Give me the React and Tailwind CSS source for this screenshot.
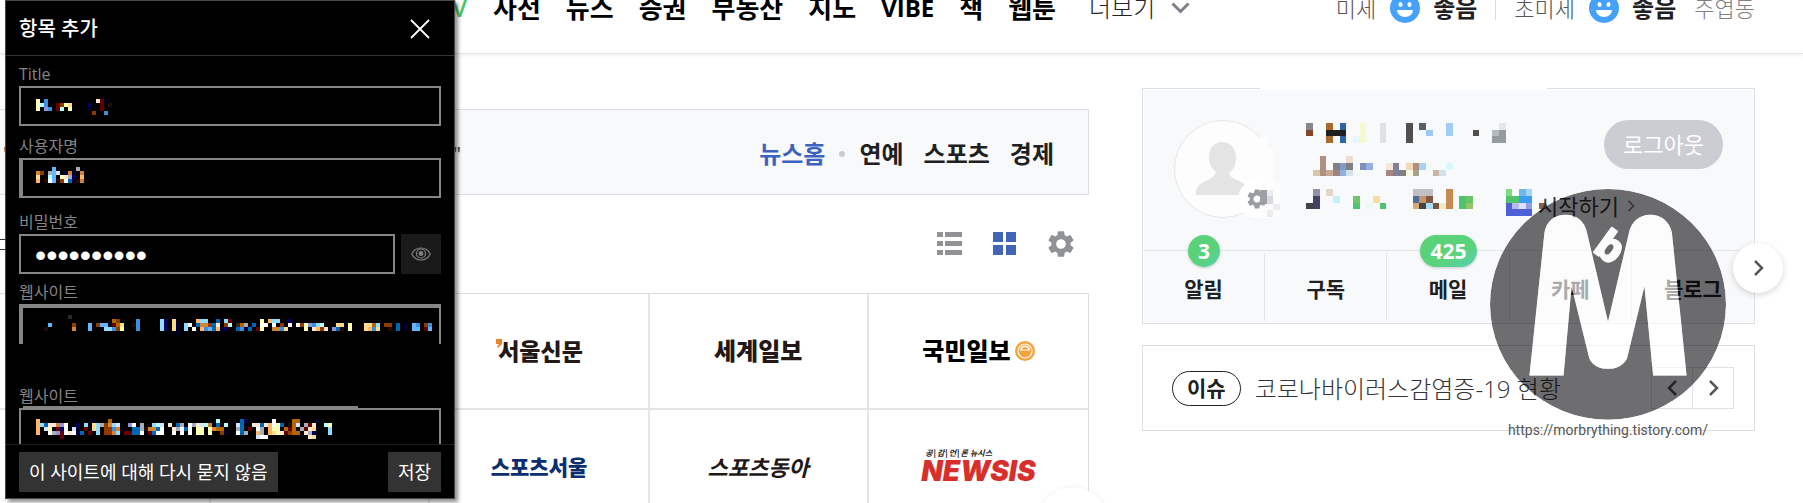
import React, { useState } from 'react';
import { MdSettings } from 'react-icons/md';

const services = ['사전', '뉴스', '증권', '부동산', '지도', 'VIBE', '책', '웹툰'];

const dust = [
  { label: '미세', value: '좋음' },
  { label: '초미세', value: '좋음' },
];

const tabs = [
  { label: '알림', badge: '3' },
  { label: '구독' },
  { label: '메일', badge: '425' },
  { label: '카페' },
  { label: '블로그' },
];

// one letter per colour of the masked field values
const palette = {
  y: '#ffffb6', Y: '#ffdb90', b: '#3a8fde', B: '#66b6ff', c: '#b6ffff', C: '#90dbff',
  m: '#660000', n: '#000066', N: '#000030', o: '#903a00', O: '#b66600', t: '#ffb666',
  T: '#cf8438', w: '#ffffff', g: '#a8adb8', G: '#2a2a2a', k: '#220a06', p: '#9090db',
  D: '#0066b6', l: '#d0e6ff', v: '#fde7d0',
};

// every row is a list of runs: start column, then one letter per cell
const masks = {
  title: ['0y 2b 15vmN', '0ycb 5moyY 13n 16m 18k', '0y 2pb 5mc 8y 13N 16m', '14o 17b'],
  user: ['4B 10g', '0To 3gBl 7NTN 11T', '0Y 3cB 6yvgn 11t', '0t 2kwBkowDNkT'],
  site: [
    '6G',
    '17Oo 23b 29Cn 32Y 38tCC 43D 45Cm 54y 56tCC 61n',
    '1B 7o 11B 13oBBNmOY 22kb 29Cn 32YN 35Cw 38DTToDv 45oc 48GOg 52D 54ww 57w 59o 61w 63woypbCc 73YY 76y 80YYOC 85oo 88D 90N 92Bb 95ob',
    '0k 7T 11B 15CCbo 19y 23b 29Cn 32YN 35C 37w 39tbBDtNn 48DbND 53my 57TTbY 65y 67vtov 72pDk 76y 80YtbY 86k 88D 90N 92BB 95mB',
    '33N',
  ],
  login: [
    '0t 14N 18O 45c 51Dn 59w 64OO 70N',
    '0tCDvvTpw 10n 12C 14YCgoTCl 23pw 26g 29Ccl 33v 35Dg 38wgvlcT 45Dkc 50lD 54vvDvtwyD 63kOl 67gmv 72cy',
    '0t 2ly 5mnw 9lN 12m 14YC 17oobT 24DDgkTTDw 34vgwDw 40yy 43yTOO 50gD 53m 55wg 58tyy 62OmO 66gmvY 73C',
    '0t 3wgpmwvwND 13m 15C 17ooTC 22mmDDw 28mDww 34w 36w 38w 40yy 43y 46oN 50wDg 55tg 58tYyvmoOO 67vgn 73C',
    '6m 55lww 68vY',
  ],
};

// column, row, width, height, colour
const profileCells = [
  [0, 0, 1, 1, '#888888'], [0, 1, 1, 1, '#84442a'], [3, 0, 1, 3, '#a8682e'], [5, 0, 1, 3, '#2a64aa'],
  [3, 1, 3, 1, '#202020'], [7, 2, 1, 1, '#e4f8fb'], [8, 0, 1, 3, '#f8f8d0'], [11, 0, 1, 3, '#dde2e6'],
  [15, 0, 1, 3, '#505050'], [17, 0, 1, 1, '#566068'], [18, 1, 1, 1, '#9cc8f4'], [21, 0, 1, 2, '#a0ccf6'],
  [25, 1, 1, 1, '#505050'], [29, 0, 1, 1, '#e4e6e8'], [28, 1, 1, 1, '#b4babf'], [29, 1, 1, 2, '#959ca0'],
  [28, 2, 1, 1, '#959ca0'],
  [1, 7, 1, 1, '#d8c4a8'], [2, 5, 1, 3, '#b09080'], [3, 7, 1, 1, '#c8aa94'], [4, 6, 1, 1, '#808080'],
  [4, 7, 1, 1, '#9c8480'], [5, 6, 1, 1, '#809cc8'], [5, 7, 1, 1, '#92b0e0'], [6, 5, 1, 1, '#ecdcd4'],
  [6, 6, 1, 1, '#808080'], [6, 7, 1, 1, '#d4e0ea'], [8, 6, 1, 1, '#8090bc'], [9, 6, 1, 1, '#92b0e0'],
  [12, 6, 1, 1, '#f6e8d8'], [12, 7, 1, 1, '#a88480'], [13, 6, 1, 2, '#808098'], [14, 7, 1, 1, '#808080'],
  [15, 6, 1, 1, '#f4d8b4'], [15, 7, 1, 1, '#f6fae4'], [16, 6, 1, 1, '#b09080'], [16, 7, 1, 1, '#a8a090'],
  [17, 6, 1, 1, '#acd0f4'], [18, 6, 1, 1, '#f4faf4'], [19, 7, 1, 1, '#ccb4a4'], [20, 7, 1, 1, '#d4e0ea'],
  [21, 6, 1, 1, '#d8f8fb'],
  [0, 12, 1, 1, '#444444'], [1, 10, 1, 1, '#9090a8'], [1, 11, 1, 2, '#444068'], [3, 10, 1, 1, '#e4d4c8'],
  [4, 11, 1, 1, '#c4f0f8'], [7, 11, 1, 1, '#70c46c'], [7, 12, 1, 1, '#50c46c'], [9, 12, 1, 1, '#ecf8f4'],
  [10, 11, 1, 1, '#f6dca0'], [11, 12, 1, 1, '#50c46c'], [16, 10, 3, 1, '#c0c0c2'], [16, 11, 1, 1, '#506c94'],
  [17, 11, 1, 1, '#c89468'], [18, 11, 1, 1, '#805844'], [16, 12, 1, 1, '#d8a870'], [17, 12, 1, 1, '#444444'],
  [18, 12, 1, 1, '#acdcf8'], [19, 12, 1, 1, '#785440'], [20, 12, 1, 1, '#f4e8cc'], [21, 10, 1, 3, '#c48c50'],
  [23, 11, 1, 2, '#50c46c'], [24, 11, 1, 1, '#68c468'], [24, 12, 1, 1, '#98c468'], [30, 10, 1, 1, '#80dc80'],
  [31, 10, 1, 1, '#ffffff'], [32, 10, 1, 1, '#6cb8ec'], [33, 10, 1, 1, '#a4d4f4'], [30, 11, 2, 1, '#50c46c'],
  [32, 11, 2, 1, '#3c9cf4'], [30, 12, 1, 1, '#4c60d8'], [31, 12, 1, 1, '#b4bcf0'], [32, 12, 1, 1, '#dce0f8'],
  [33, 12, 1, 1, '#949ce8'], [30, 13, 4, 1, '#4c60d8'], [35, 12, 1, 1, '#8c6048'],
];

function Mask({ rows, className }) {
  const cells = [];
  rows.forEach((row, y) => {
    row.split(' ').forEach((run) => {
      const [, start, letters] = run.match(/^(\d+)([a-zA-Z]+)$/);
      [...letters].forEach((l, i) => {
        cells.push({ x: Number(start) + i, y, fill: palette[l] });
      });
    });
  });
  return (
    <svg
      width="400"
      height="20"
      viewBox="0 0 100 5"
      shapeRendering="crispEdges"
      aria-hidden="true"
      className={`absolute pointer-events-none ${className}`}
    >
      {cells.map((c) => (
        <rect key={`${c.x}-${c.y}`} x={c.x} y={c.y} width="1" height="1" fill={c.fill} />
      ))}
    </svg>
  );
}

function Chevron({ dir = 'right', className }) {
  const d = { right: 'M2 1l7 7-7 7', left: 'M9 1L2 8l7 7' }[dir];
  return (
    <svg width="11" height="16" viewBox="0 0 11 16" fill="none" stroke="currentColor" strokeWidth="2.5" className={className}>
      <path d={d} />
    </svg>
  );
}

function Smile() {
  return (
    <svg width="30" height="30" viewBox="0 0 30 30" className="shrink-0">
      <circle cx="15" cy="15" r="15" fill="#45a1fb" />
      <ellipse cx="10.5" cy="11.5" rx="2" ry="2.5" fill="#fff" />
      <ellipse cx="19.5" cy="11.5" rx="2" ry="2.5" fill="#fff" />
      <path d="M7 17h16a8 7 0 0 1-16 0z" fill="#fff" />
    </svg>
  );
}

function Field({ id, label, className, children }) {
  return (
    <div className={className}>
      <label htmlFor={id} className="block h-6 text-base leading-6 text-[#858585]">
        {label}
      </label>
      <div className="relative flex gap-1.5">{children}</div>
    </div>
  );
}

function SaveDialog() {
  const [password, setPassword] = useState('0000000000');
  const [visible, setVisible] = useState(false);

  return (
    <section
      role="dialog"
      aria-label="항목 추가"
      className="absolute left-[5px] top-0 z-20 flex flex-col w-[450px] h-[499px] bg-black border border-[#4a4a4a] shadow-[3px_3px_4px_rgba(0,0,0,0.45)]"
    >
      <header className="flex items-center justify-between shrink-0 h-[55px] pl-[13px] pr-6 pt-0.5 border-b border-[#333]">
        <h2 className="text-xl font-medium text-white">항목 추가</h2>
        <button aria-label="닫기" className="text-white">
          <svg width="20" height="20" viewBox="0 0 20 20" stroke="currentColor" strokeWidth="1.8">
            <path d="M1 1l18 18M19 1L1 19" />
          </svg>
        </button>
      </header>

      <div className="flex-1 overflow-hidden px-[13px] pt-1.5">
        <Field id="title" label="Title">
          <input id="title" className="w-full h-10 px-4 bg-black text-white border-2 border-[#858585]" />
          <Mask rows={masks.title} className="left-[17px] top-[13px]" />
        </Field>

        <Field id="user" label="사용자명" className="mt-2">
          <input id="user" className="w-full h-10 px-4 bg-black text-white border-2 border-l-4 border-[#858585]" />
          <Mask rows={masks.user} className="left-[17px] top-[9px]" />
        </Field>

        <Field id="password" label="비밀번호" className="mt-3">
          <input
            id="password"
            type={visible ? 'text' : 'password'}
            value={password}
            onChange={(e) => setPassword(e.target.value)}
            className="flex-1 min-w-0 h-10 px-3.5 pt-0.5 bg-black text-white border-2 border-[#858585] font-['Liberation_Sans',sans-serif] text-[32px] leading-9"
          />
          <button
            aria-label="비밀번호 표시"
            onClick={() => setVisible(!visible)}
            className="flex items-center justify-center size-10 bg-[#1a1a1a] text-[#808080]"
          >
            <svg width="20" height="14" viewBox="0 0 20 14" fill="none" stroke="currentColor" strokeWidth="1.2">
              <path d="M0.8 7C4.5-1 15.500-1 19.200 7C15.500 15 4.500 15 0.800 7z" />
              <circle cx="10" cy="6.500" r="4.500" />
              <circle cx="10" cy="6.500" r="1.800" fill="currentColor" />
            </svg>
          </button>
        </Field>

        <Field id="site" label="웹사이트" className="mt-1.5">
          <input
            id="site"
            className="w-full h-10 px-4 bg-black text-white border-2 border-t-4 border-l-4 border-b-0 border-[#858585]"
          />
          <Mask rows={masks.site} className="left-[25px] top-[11px]" />
        </Field>

        <Field id="login" label="웹사이트" className="mt-10">
          <input id="login" className="w-full h-10 px-4 bg-black text-white border-2 border-[#858585]" />
          <span className="absolute left-1 -top-0.5 w-[335px] h-0.5 bg-[#858585]" />
          <Mask rows={masks.login} className="left-[17px] top-[11px]" />
        </Field>
      </div>

      <footer className="flex items-center justify-between shrink-0 h-[54px] px-[13px] border-t border-[#1e1e1e]">
        <button className="h-10 px-2.5 bg-[#333] text-white text-lg whitespace-nowrap">
          이 사이트에 대해 다시 묻지 않음
        </button>
        <button className="h-10 px-2.5 bg-[#333] text-white text-lg whitespace-nowrap">저장</button>
      </footer>
    </section>
  );
}

function TopBar() {
  return (
    <header className="relative z-10 flex items-start h-[54px] pr-12 bg-white border-b border-[#e5e5e5] shadow-[0_1px_5px_rgba(0,0,0,0.08)] whitespace-nowrap">
      <nav className="flex items-center gap-[25px] -mt-2 h-8 text-[26px] leading-8 font-bold text-black">
        <a href="#tv" className="w-[468px] pr-px text-right text-2xl leading-8 font-semibold text-[#4cc764]">
          TV
        </a>
        {services.map((name) => (
          <a key={name} href={`#${name}`} className={name === 'VIBE' ? 'text-2xl leading-8' : ''}>
            {name}
          </a>
        ))}
        <button className="flex items-center gap-4 ml-2 text-2xl font-light text-[#222]">
          더보기
          <svg width="19" height="12" viewBox="0 0 19 12" fill="none" stroke="#7b8087" strokeWidth="3">
            <path d="M1.500 1.500l8 8 8-8" />
          </svg>
        </button>
      </nav>

      <div className="flex items-center -mt-2 h-8 ml-auto text-[22px] leading-8 text-[#555]">
        {dust.map(({ label, value }, i) => (
          <div
            key={label}
            className={`flex items-center ${i ? 'ml-[18px]' : 'pr-[18px] border-r border-[#d8dadd] h-6'}`}
          >
            <span className="font-light">{label}</span>
            <span className="ml-3.5 mr-[13px]">
              <Smile />
            </span>
            <strong className="text-2xl leading-8 font-bold text-[#202022]">{value}</strong>
          </div>
        ))}
        <span className="ml-[18px] font-light text-[#808080]">주엽동</span>
      </div>
    </header>
  );
}

function PressGrid() {
  return (
    <div className="grid grid-cols-5 border-t border-r border-[#d9dee2]">
      <PressCell />
      <PressCell />
      <PressCell>
        <span className="flex text-[#231815] text-[23px] font-black">
          <svg width="7" height="10" viewBox="0 0 7 10" className="-mr-1 mt-1">
            <path d="M1 0h6v5l-4 4-1-1 2-3H1z" fill="#e9822a" />
          </svg>
          서울신문
        </span>
      </PressCell>
      <PressCell>
        <span className="text-[#231815] text-2xl font-black">세계일보</span>
      </PressCell>
      <PressCell>
        <span className="flex items-center gap-1 text-black text-2xl font-black">
          국민일보
          <svg width="20" height="20" viewBox="0 0 20 20">
            <circle cx="10" cy="10" r="10" fill="#f7a23b" />
            <circle cx="10" cy="10" r="7" fill="none" stroke="#fff" strokeWidth="1.200" />
            <path d="M5 9.500a5 5 0 0 1 10 0z" fill="#fff" />
            <path d="M7 8.500a3 2.500 0 0 1 6 0z" fill="#f7a23b" />
          </svg>
        </span>
      </PressCell>
      <PressCell />
      <PressCell />
      <PressCell>
        <span className="text-[#0a2e6e] text-[21px] font-black">스포츠서울</span>
      </PressCell>
      <PressCell>
        <span className="text-[#231815] text-[22px] font-bold italic">스포츠동아</span>
      </PressCell>
      <PressCell>
        <span className="flex flex-col gap-1 pb-1 text-[#231815] italic">
          <small className="pl-1 text-[8px] leading-2 font-bold">공|감|언|론 뉴시스</small>
          <strong className="font-['Inter',sans-serif] text-[28px] leading-5 font-black text-[#d92f2b]">NEWSIS</strong>
        </span>
      </PressCell>
    </div>
  );
}

function PressCell({ children }) {
  return (
    <a
      href="#press"
      className="flex items-center justify-center h-[116px] border-b-2 border-r-2 border-[#e2e6e9] nth-[5n]:border-r-0 leading-8 whitespace-nowrap"
    >
      {children}
    </a>
  );
}

function NewsColumn() {
  return (
    <main className="relative flex-1 min-w-0 -ml-2 mt-[21px]">
      <div className="flex items-center h-[86px] bg-[#f8f9fb] border border-[#d9dfe4] pl-2.5 pr-[34px] pt-1 text-2xl leading-8 whitespace-nowrap">
        <span className="flex justify-between w-[458px] text-xl text-[#333]">
          <span>"</span>
          <span>"</span>
        </span>
        <nav className="flex items-center ml-auto font-bold text-[#202022]">
          <a href="#home" className="text-[#3d63c0]">뉴스홈</a>
          <span className="size-1.5 mx-3.5 rounded-full bg-[#c8cbd0]" />
          <a href="#entertain">연예</a>
          <a href="#sports" className="ml-5">스포츠</a>
          <a href="#economy" className="ml-5">경제</a>
        </nav>
      </div>

      <div className="flex items-center h-[98px] pr-3">
        <span className="w-3.5 h-[11px] border-y border-[#333]" />
        <button aria-label="리스트형" className="ml-auto">
          <svg width="25" height="24" viewBox="0 0 25 24" fill="#909297">
            <path d="M0 0h6v5H0zM8 0h17v5H8zM0 9h6v5H0zM8 9h17v5H8zM0 18h6v5H0zM8 18h17v5H8z" />
          </svg>
        </button>
        <button aria-label="썸네일형" className="ml-[31px]">
          <svg width="23" height="24" viewBox="0 0 23 24" fill="#4265b8">
            <path d="M0 0h10v10H0zM13 0h10v10H13zM0 13h10v10H0zM13 13h10v10H13z" />
          </svg>
        </button>
        <button aria-label="설정" className="ml-[29px] text-[#909297]">
          <MdSettings size={32} />
        </button>
      </div>

      <PressGrid />
      <span className="absolute -right-[52px] left-auto top-[378px] size-[72px] mr-8 rounded-full bg-white shadow-[0_0_4px_rgba(0,0,0,0.08)]" />
    </main>
  );
}

function AccountCard() {
  return (
    <section className="relative border border-[#d9dfe4] bg-[#f8f9fb] shadow-[inset_0_0_0_1px_#fff]">
      <span className="absolute left-[117px] -top-px w-[287px] h-0.5 bg-white" />
      <div className="flex px-[31px] pt-[31px] pb-8">
        <a href="#profile" aria-label="프로필" className="relative shrink-0 size-[98px]">
          <svg width="118" height="98" viewBox="0 0 118 98" className="max-w-none">
            <circle cx="49" cy="49" r="48.500" fill="#fdfdfd" stroke="#e4e6e8" />
            <path d="M86 16h8v14h5v36h-13z" fill="#fdfdfd" />
            <path
              d="M48 22c9 0 14 7 14 16 0 7-3 12-7 15 1 5 6 6 12 9 6 4 9 5 9 13H22c0-8 2-10 8-13 6-3 11-6 12-10-4-3-7-8-7-14 0-9 4-16 13-16z"
              fill="#e4e4e4"
            />
            <circle cx="83" cy="79" r="19" fill="#fff" />
            <path d="M86 60h13v3h7v26h-7v9h-13z" fill="#fdfdfd" />
          </svg>
          <MdSettings size={24} className="absolute left-[71px] top-[67px] text-[#9b9fa4]" />
          <svg width="20" height="27" viewBox="0 0 60 80" shapeRendering="crispEdges" className="absolute left-[86px] top-[70px]">
            <path d="M0 0h20v40H0z" fill="#9ca0a4" />
            <path d="M20 0h40v80H20zM0 56h20v24H0z" fill="#fdfdfd" />
            <path d="M20 0h20v18H20zM40 40h20v20H40zM20 60h20v20H20z" fill="#ebecee" />
            <path d="M20 18h20v22H20z" fill="#d8dadc" />
          </svg>
        </a>

        <svg width="240" height="93" viewBox="0 0 36 14" shapeRendering="crispEdges" className="shrink-0 ml-[34px] mt-[3px]">
          {profileCells.map(([x, y, w, h, fill]) => (
            <rect key={`${x}-${y}-${w}`} x={x} y={y} width={w} height={h} fill={fill} />
          ))}
        </svg>

        <div className="flex flex-col flex-1 justify-between">
          <button className="self-end h-[49px] px-[19px] rounded-full bg-[#cbcdd3] text-white text-[22px] whitespace-nowrap">
            로그아웃
          </button>
          <a href="#start" className="flex items-center gap-2 -ml-2 text-[22px] leading-6 text-[#333] whitespace-nowrap">
            시작하기
            <Chevron className="h-3 w-2 text-[#888]" />
          </a>
        </div>
      </div>

      <ul className="grid grid-cols-5 border-t border-[#e2e4e7]">
        {tabs.map(({ label, badge }) => (
          <li key={label} className="relative h-[72px] py-0.5">
            <a
              href={`#${label}`}
              className={`flex justify-center h-full pt-5 text-[21px] leading-8 font-bold text-[#202022] ${
                label === '블로그' ? '' : 'border-r border-[#e2e4e7]'
              }`}
            >
              {label}
            </a>
            {badge && (
              <span className="absolute left-1/2 -top-4 -translate-x-1/2 h-8 px-[10px] rounded-full bg-linear-to-br from-[#5ad279] from-60% to-[#58d0b4] text-white text-[21px] leading-8 font-bold shadow-[0_1px_3px_rgba(0,0,0,0.2)]">
                {badge}
              </span>
            )}
          </li>
        ))}
      </ul>
    </section>
  );
}

function Watermark() {
  return (
    <div className="absolute right-[29px] top-[101px] flex flex-col items-center w-[236px] pointer-events-none">
      <svg width="236" height="231" viewBox="0 0 706 691">
        <defs>
          <mask id="emblem">
            <ellipse cx="353" cy="345" rx="353" ry="345" fill="#fff" />
            <Emblem color="#000" />
          </mask>
        </defs>
        <ellipse cx="353" cy="345" rx="353" ry="345" fill="#000004" fillOpacity="0.57" mask="url(#emblem)" />
        <Emblem color="#fff" opacity="0.62" />
      </svg>
      <span className="font-['Roboto',sans-serif] text-sm leading-5 text-[#555]">https://morbrything.tistory.com/</span>
    </div>
  );
}

function Emblem({ color, opacity }) {
  return (
    <g fill={color} opacity={opacity}>
      <path d="M118 558L163 130C168 98 192 77 226 77S284 98 290 130L353 397L416 130C422 98 448 77 480 77S538 98 544 130L588 558H488L462 291L410 506C400 526 382 538 353 538S306 526 297 506L244 291L220 558z" />
      <text
        x="306"
        y="184"
        transform="rotate(36 306 184)"
        fontFamily="Liberation Sans, sans-serif"
        fontWeight="700"
        fontSize="122"
        stroke={color}
        strokeWidth="8"
        strokeLinejoin="round"
      >
        b
      </text>
    </g>
  );
}

function Sidebar() {
  return (
    <aside className="relative shrink-0 w-[613px] whitespace-nowrap">
      <AccountCard />

      <section className="flex items-center h-[86px] mt-[21px] pl-[29px] pr-5 border border-[#dadfe3] bg-white">
        <span className="px-3.5 rounded-full border border-[#202022] text-[21px] leading-[33px] font-bold text-[#202022]">
          이슈
        </span>
        <a href="#issue" className="ml-3.5 pt-0.5 text-2xl leading-8 font-light text-[#333]">
          코로나바이러스감염증-19 현황
        </a>
        <div className="flex ml-auto border border-[#dfe1e4] text-[#555]">
          <button aria-label="이전" className="flex items-center justify-center size-10">
            <Chevron dir="left" />
          </button>
          <button aria-label="다음" className="flex items-center justify-center w-[41px] h-10 border-l border-[#dfe1e4]">
            <Chevron />
          </button>
        </div>
      </section>

      <Watermark />
      <button
        aria-label="다음"
        className="absolute -right-7 top-[155px] flex items-center justify-center size-[50px] rounded-full bg-white text-[#55585d] shadow-[0_2px_6px_rgba(0,0,0,0.16)]"
      >
        <Chevron />
      </button>
    </aside>
  );
}

export default function App() {
  return (
    <div className="relative h-screen overflow-hidden bg-white font-['Open_Sans','Noto_Sans_CJK_KR',sans-serif]">
      <TopBar />
      <div className="flex gap-[53px] pr-12 pt-[34px]">
        <NewsColumn />
        <Sidebar />
      </div>
      <SaveDialog />
    </div>
  );
}
